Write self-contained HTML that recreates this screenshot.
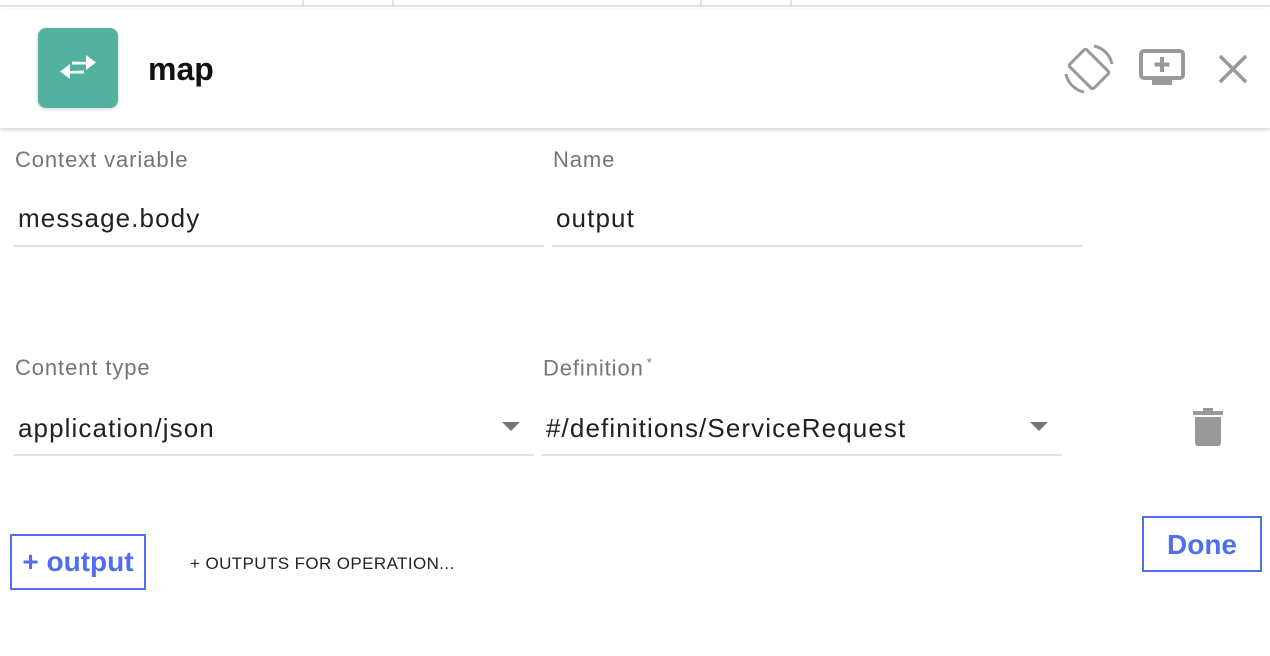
<!DOCTYPE html>
<html><head><meta charset="utf-8"><style>
*{box-sizing:border-box;margin:0;padding:0}
body{width:1270px;height:656px;background:#fff;font-family:"Liberation Sans",Arial,sans-serif;position:relative;overflow:hidden}
.a{position:absolute;white-space:nowrap}
.lbl{font-size:22px;color:#757575;letter-spacing:0.9px}
.val{font-size:26px;color:#212121;letter-spacing:1.1px}
.line{height:2px;background:#e0e0e0}
.tri{width:0;height:0;border-left:9px solid transparent;border-right:9px solid transparent;border-top:9px solid #757575}
</style></head><body>
<div class="a" style="left:0;top:0;width:1270px;height:7px;border-bottom:2px solid #e0e0e0"></div>
<div class="a" style="left:302px;top:0;width:2px;height:7px;background:#e0e0e0"></div>
<div class="a" style="left:392px;top:0;width:2px;height:7px;background:#e0e0e0"></div>
<div class="a" style="left:700px;top:0;width:2px;height:7px;background:#e0e0e0"></div>
<div class="a" style="left:790px;top:0;width:2px;height:7px;background:#e0e0e0"></div>
<div class="a" style="left:0;top:9px;width:1270px;height:119px;background:#fff;box-shadow:0 2px 4px rgba(0,0,0,.18)"></div>
<div class="a" style="left:38px;top:28px;width:80px;height:80px;border-radius:8px;background:#52b29f;box-shadow:0 1px 3px rgba(0,0,0,.2)">
<svg width="80" height="80" viewBox="0 0 80 80"><g fill="#fff"><polygon points="48,34 48,27 58,34.5 48,42 48,36.5 34,36.5 34,33.5"/><polygon points="32,44 32,37 22,44.5 32,52 32,46.5 46,46.5 46,43.5" transform="translate(0,-1)"/></g></svg></div>
<div class="a" style="left:148px;top:51px;font-size:32px;font-weight:bold;color:#111">map</div>
<svg class="a" style="left:1064px;top:44px" width="50" height="50" viewBox="0 0 50 50" fill="none" stroke="#999" stroke-width="3"><rect x="13" y="8" width="24" height="34" rx="2" transform="rotate(-45 25 25)"/><path d="M30 2 A23 23 0 0 1 48 20" /><path d="M20 48 A23 23 0 0 1 2 30"/></svg>
<svg class="a" style="left:1138px;top:48px" width="48" height="40" viewBox="0 0 48 40"><rect x="3" y="3" width="42" height="27" rx="3" fill="none" stroke="#999" stroke-width="4"/><rect x="14" y="31" width="20" height="6" fill="#999"/><path d="M24 9v15M16.5 16.5h15" stroke="#999" stroke-width="4"/></svg>
<svg class="a" style="left:1218px;top:54px" width="30" height="30" viewBox="0 0 30 30"><path d="M2 2L28 28M28 2L2 28" stroke="#999" stroke-width="3.5"/></svg>
<div class="a lbl" style="left:15px;top:147px">Context variable</div>
<div class="a val" style="left:18px;top:203px">message.body</div>
<div class="a line" style="left:14px;top:245px;width:530px"></div>
<div class="a lbl" style="left:553px;top:147px">Name</div>
<div class="a val" style="left:556px;top:203px">output</div>
<div class="a line" style="left:552px;top:245px;width:530px"></div>
<div class="a lbl" style="left:15px;top:355px">Content type</div>
<div class="a val" style="left:18px;top:413px">application/json</div>
<div class="a tri" style="left:502px;top:422px"></div>
<div class="a line" style="left:14px;top:454px;width:520px"></div>
<div class="a lbl" style="left:543px;top:355px">Definition<sup style="font-size:13px;margin-left:3px">*</sup></div>
<div class="a val" style="left:546px;top:413px">#/definitions/ServiceRequest</div>
<div class="a tri" style="left:1030px;top:422px"></div>
<div class="a line" style="left:542px;top:454px;width:520px"></div>
<svg class="a" style="left:1192px;top:406px" width="32" height="40" viewBox="0 0 32 40"><rect x="1" y="5" width="30" height="4" fill="#999"/><rect x="11" y="2" width="10" height="4" fill="#999"/><path d="M3 11h26v26a3 3 0 0 1-3 3H6a3 3 0 0 1-3-3z" fill="#999"/></svg>
<div class="a" style="left:10px;top:534px;width:136px;height:56px;border:2px solid #4f6ef0;color:#4f6ef0;font-size:28px;font-weight:bold;line-height:52px;text-align:center">+ output</div>
<div class="a" style="left:190px;top:554px;font-size:17px;color:#222;letter-spacing:0.4px">+ OUTPUTS FOR OPERATION...</div>
<div class="a" style="left:1142px;top:516px;width:120px;height:56px;border:2px solid #4f6ef0;color:#4f6ef0;font-size:28px;font-weight:bold;line-height:54px;text-align:center">Done</div>
</body></html>
